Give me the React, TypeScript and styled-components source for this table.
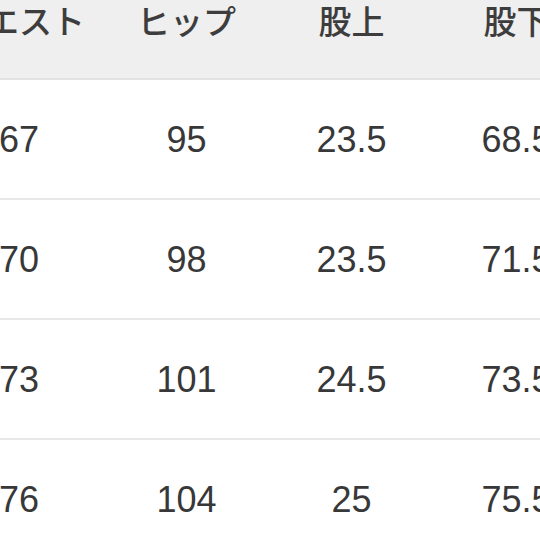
import React from "react";
import styled, { createGlobalStyle } from "styled-components";

const GlobalStyle = createGlobalStyle`
  html, body {
    margin: 0;
    padding: 0;
    background: #ffffff;
    overflow: hidden;
  }
  body {
    font-family: "Liberation Sans", "Noto Sans CJK JP", sans-serif;
  }
`;

const Page = styled.div`
  width: 540px;
  height: 540px;
  overflow: hidden;
`;

// the table runs past the crop on the left, right and top
const Table = styled.div`
  margin-top: -40px;
  margin-left: -66px;
  width: 670px;
`;

const Row = styled.div<{ $head?: boolean }>`
  display: grid;
  grid-template-columns: 170px repeat(3, 165px);
  height: 120px;
  align-items: center;
  background: ${(p) => (p.$head ? "#efefef" : "#ffffff")};
  border-bottom: 2px solid ${(p) => (p.$head ? "#e2e2e2" : "#e8e8e8")};
  box-sizing: border-box;
`;

const HeadCell = styled.div`
  text-align: center;
  font-family: "Noto Sans CJK JP", sans-serif;
  font-size: 33px;
  font-weight: 500;
  color: #3d3d3d;
  margin-top: 1px;
`;

const Cell = styled.div`
  text-align: center;
  font-family: "Liberation Sans", Arial, sans-serif;
  font-size: 36px;
  color: #383838;
  margin-top: 1px;
`;

const headers = ["ウエスト", "ヒップ", "股上", "股下"];

const rows = [
  ["67", "95", "23.5", "68.5"],
  ["70", "98", "23.5", "71.5"],
  ["73", "101", "24.5", "73.5"],
  ["76", "104", "25", "75.5"],
];

const App = () => {
  return (
    <Page>
      <GlobalStyle />
      <Table>
        <Row $head>
          {headers.map((h) => (
            <HeadCell key={h}>{h}</HeadCell>
          ))}
        </Row>
        {rows.map((r, i) => (
          <Row key={i}>
            {r.map((v, j) => (
              <Cell key={j}>{v}</Cell>
            ))}
          </Row>
        ))}
      </Table>
    </Page>
  );
};

export default App;
